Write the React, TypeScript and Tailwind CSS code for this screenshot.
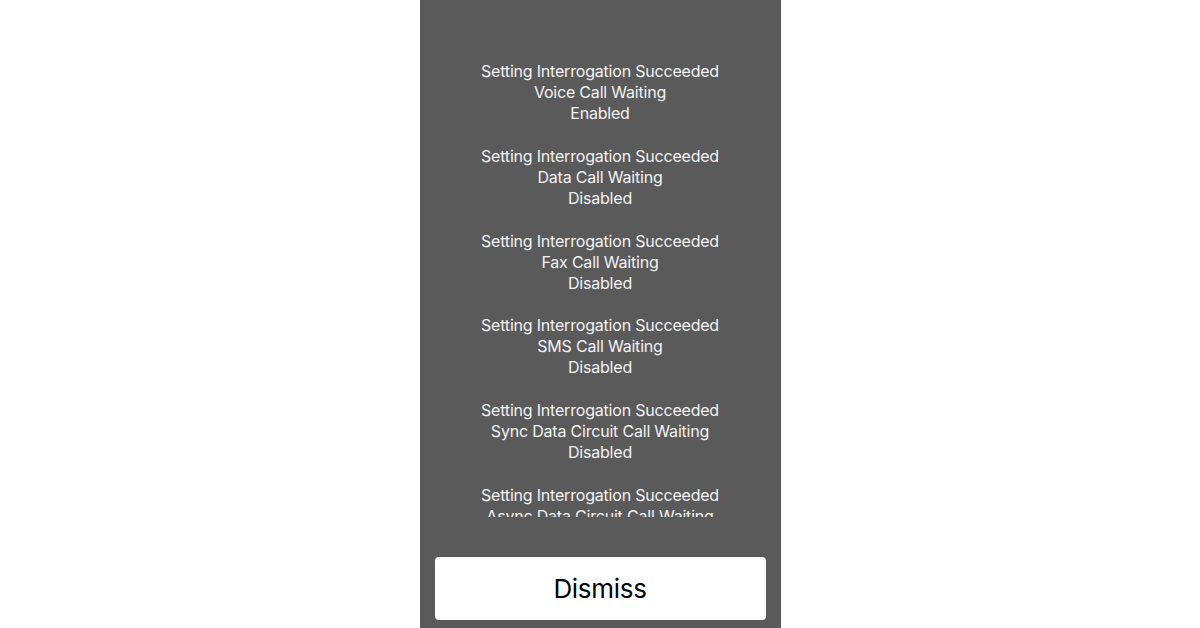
const results = [
  ['Voice Call Waiting', 'Enabled'],
  ['Data Call Waiting', 'Disabled'],
  ['Fax Call Waiting', 'Disabled'],
  ['SMS Call Waiting', 'Disabled'],
  ['Sync Data Circuit Call Waiting', 'Disabled'],
  ['Async Data Circuit Call Waiting', 'Disabled'],
];

export default function App() {
  return (
    <div className="w-[1200px] h-[628px] bg-white flex justify-center font-['Inter',sans-serif]">
      <div className="w-[361px] h-[628px] bg-[#5a5a5a] flex flex-col">
        {/* scrolling result list, clipped mid-item like the real sheet */}
        <div className="h-[517px] shrink-0 overflow-hidden pt-[61px] flex flex-col gap-[21.8px]">
          {results.map(([service, status]) => (
            <div key={service} className="text-center text-[16px] leading-[21px] text-[#f2f2f2] tracking-[-0.2px]">
              <p>Setting Interrogation Succeeded</p>
              <p>{service}</p>
              <p>{status}</p>
            </div>
          ))}
        </div>
        <button className="mt-[40px] mx-[15px] h-[63px] bg-white rounded-[4px] text-[26px] text-black tracking-[-0.3px]">
          Dismiss
        </button>
      </div>
    </div>
  );
}
